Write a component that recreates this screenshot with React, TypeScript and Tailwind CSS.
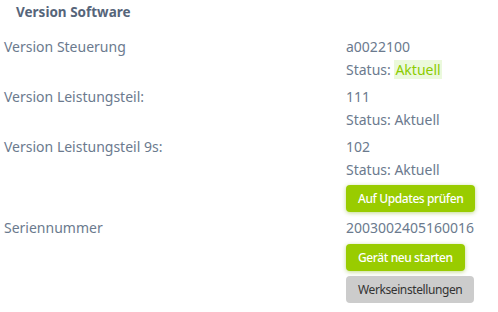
import React from "react";

const FONT = "font-['Noto_Sans',sans-serif]";

const Btn = ({
  label,
  gray,
  className = "",
}: {
  label: string;
  gray?: boolean;
  className?: string;
}) => (
  <button
    className={`h-[27px] rounded-[4px] px-[12px] text-[12px] leading-[27px] tracking-[-0.4px] ${
      gray
        ? "bg-[#cccccc] text-[#333333]"
        : "bg-[#99cc00] font-medium text-white shadow-[0_1px_4px_rgba(120,170,0,0.45)]"
    } ${className}`}
  >
    {label}
  </button>
);

const Row = ({
  label,
  children,
  className = "",
}: {
  label: string;
  children: React.ReactNode;
  className?: string;
}) => (
  <div className={`flex ${className}`}>
    <div className="w-[346px] shrink-0 pl-[4px] leading-[23px]">{label}</div>
    <div className="flex flex-col items-start leading-[23px]">{children}</div>
  </div>
);

export default function App() {
  return (
    <div
      className={`h-[312px] w-[498px] overflow-hidden bg-white text-[14px] text-[#6b7a8e] ${FONT}`}
    >
      <h3 className="pl-[16px] pt-[1px] text-[13.5px] font-bold leading-[22px] text-[#56657a]">
        Version Software
      </h3>
      <div className="mt-[12px] flex flex-col gap-[4px]">
        <Row label="Version Steuerung">
          <span>a0022100</span>
          <span>
            Status:{" "}
            <span className="bg-[#ebf9dc] px-[1px] text-[#8ccc00]">Aktuell</span>
          </span>
        </Row>
        <Row label="Version Leistungsteil:">
          <span>111</span>
          <span>Status: Aktuell</span>
        </Row>
        <Row label="Version Leistungsteil 9s:">
          <span>102</span>
          <span>Status: Aktuell</span>
          <Btn label="Auf Updates prüfen" className="mt-[4px]" />
        </Row>
        <Row label="Seriennummer">
          <span>2003002405160016</span>
          <Btn label="Gerät neu starten" className="mt-[5px]" />
          <Btn label="Werkseinstellungen" gray className="mt-[5px]" />
        </Row>
      </div>
    </div>
  );
}
